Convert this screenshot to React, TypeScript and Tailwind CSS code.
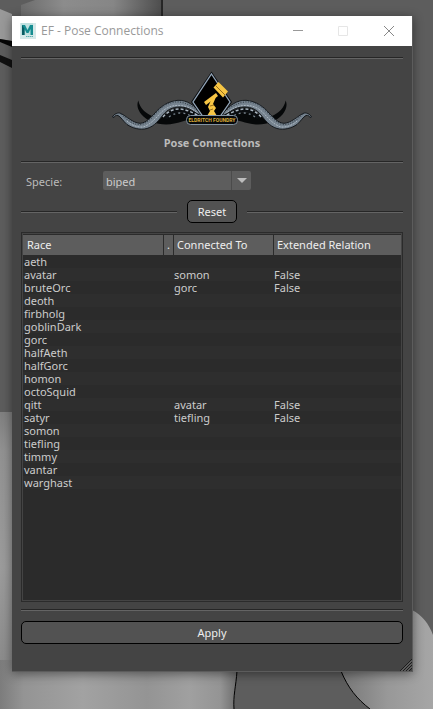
import React from "react";

const rows: [string, string, string][] = [
  ["aeth", "", ""],
  ["avatar", "somon", "False"],
  ["bruteOrc", "gorc", "False"],
  ["deoth", "", ""],
  ["firbholg", "", ""],
  ["goblinDark", "", ""],
  ["gorc", "", ""],
  ["halfAeth", "", ""],
  ["halfGorc", "", ""],
  ["homon", "", ""],
  ["octoSquid", "", ""],
  ["qitt", "avatar", "False"],
  ["satyr", "tiefling", "False"],
  ["somon", "", ""],
  ["tiefling", "", ""],
  ["timmy", "", ""],
  ["vantar", "", ""],
  ["warghast", "", ""],
];

function Separator({ className = "" }: { className?: string }) {
  return <div className={`h-0.5 border-t border-b border-t-[#262626] border-b-[#646464] ${className}`} />;
}

/* Shaded viewport model behind the dialog */
function Viewport() {
  return (
    <svg className="absolute inset-0 h-full w-full" viewBox="0 0 433 709" preserveAspectRatio="none" aria-hidden="true">
      <defs>
        <linearGradient id="head" x1="0" x2="1" y1="0" y2="0">
          <stop offset="0" stopColor="#6c6c6c" />
          <stop offset="0.3" stopColor="#8c8c8c" />
          <stop offset="0.65" stopColor="#868686" />
          <stop offset="1" stopColor="#4c4c4c" />
        </linearGradient>
        <linearGradient id="arm" x1="0" x2="0" y1="0" y2="1">
          <stop offset="0" stopColor="#808080" />
          <stop offset="0.15" stopColor="#929292" />
          <stop offset="0.6" stopColor="#9c9c9c" />
          <stop offset="1" stopColor="#8a8a8a" />
        </linearGradient>
        <linearGradient id="belly" x1="0" x2="1" y1="0" y2="0">
          <stop offset="0" stopColor="#7c7c7c" />
          <stop offset="0.1" stopColor="#949494" />
          <stop offset="0.35" stopColor="#a2a2a2" />
          <stop offset="0.62" stopColor="#949494" />
          <stop offset="0.8" stopColor="#a0a0a0" />
          <stop offset="0.93" stopColor="#949494" />
          <stop offset="1" stopColor="#6c6c6c" />
        </linearGradient>
        <linearGradient id="thigh" x1="0" x2="1" y1="0" y2="0">
          <stop offset="0" stopColor="#777" />
          <stop offset="0.5" stopColor="#989898" />
          <stop offset="1" stopColor="#a6a6a6" />
        </linearGradient>
      </defs>
      <path d="M21 16V5L35 0H163V16Z" fill="url(#head)" />
      <path d="M162 0V16" stroke="#000" />
      <path d="M0 9L12 14V41L0 39Z" fill="#999" />
      <path d="M0 39L12 41V47L0 42Z" fill="#050505" />
      <path d="M0 55L12 60V68L0 62Z" fill="#111" />
      <path d="M0 412H12V671H0Z" fill="url(#arm)" />
      <path d="M0 660H237C237 680 234 695 234 709H0Z" fill="url(#belly)" />
      <path d="M237 671C236 686 233 696 234 709" fill="none" stroke="#000" />
      <path d="M341 671H412V610C422 615 429 624 433 635V709H370C357 699 348 688 341 671Z" fill="url(#thigh)" />
      <path d="M341 671C348 688 357 699 370 709" fill="none" stroke="#000" />
    </svg>
  );
}

function MayaIcon() {
  return (
    <svg className="h-4 w-4" viewBox="0 0 16 16" aria-hidden="true">
      <path d="M0 0H16V16H0Z" fill="#d6e9e9" />
      <path d="M1 0H13V12H1Z" fill="#bfe0df" />
      <path d="M2 12V2H5L7.500 7L10 2H13V12H10.500V6L8.500 10H6.500L4.500 6V12Z" fill="#168d91" />
      <path d="M2 12V2L4.500 6V12Z" fill="#0a5c63" />
      <path d="M6 13.500H13" stroke="#5fb0b0" strokeDasharray="1.500 0.500" />
    </svg>
  );
}

function Tentacle() {
  return (
    <g>
      <path
        d="M26.300 29.500C28 37 33 42 40 45L60 42L80 41L82 47C74 49 66 53 54 53.500C44 53.500 35 50 29.500 43.500C25.500 38.500 24.500 34 26.300 29.500Z"
        fill="#060809"
      />
      <path
        d="M0.500 46C2 43 6 41 9 42.500C14 45 21 52 28 52.300C34 52 38 47 43 42C48 36 56 30 66 29.300C75 29 82 34 89 42V46C82 40 76 36 68 36C60 36 55 39 51 44C47 49 43 55 35 57.500C28 59.500 20 57 15 53.500C11 50 9 46 6 44.500C4 44 2.500 45 2 46.500Z"
        fill="#76838f"
        stroke="#15191d"
        strokeWidth="1"
      />
      <path
        d="M15 50C19 54 25 56.500 31 56C38 54 44 47 49 41.500C55 35.500 62 34 68 34.500C76 35 80 38 86 42"
        fill="none"
        stroke="#b3bec8"
        strokeWidth="0.900"
        strokeDasharray="2 1"
      />
      <path
        d="M9 43C16 50 22 54 29 53.500C36 52 41 45 47 39C54 32 61 30.500 67 31C75 32 80 35 85 39"
        fill="none"
        stroke="#39434c"
        strokeWidth="1.200"
        strokeDasharray="1 1.500"
      />
      <path d="M53 47C57 42 62 39 68 39C74 39 79 42 87 46" fill="none" stroke="#0a0d10" strokeWidth="5" />
      <path d="M51 46C55 41 61 38 67 38C74 38 79 41 87 45" fill="none" stroke="#aab6c1" strokeWidth="1.500" strokeDasharray="3 2" />
      <path d="M57 46C61 43 65 42 69 42C74 42 77 44 81 46" fill="none" stroke="#78858f" strokeWidth="1.300" strokeDasharray="2 3" />
    </g>
  );
}

function Logo() {
  return (
    <svg className="h-[60px] w-[200px]" viewBox="0 0 200 60" role="img" aria-label="Eldritch Foundry">
      <Tentacle />
      <g transform="matrix(-1 0 0 1 200 0)">
        <Tentacle />
      </g>
      <path d="M99.500 0.500L120 31L107 49H92L79 31Z" fill="#0a0d10" />
      <path d="M99.500 3L118 31L107 47H92L81 31Z" fill="#000" stroke="#93a5b8" strokeWidth="1.300" />
      <g fill="#f6c544">
        <path d="M92 31L104 22L106 25L94 34Z" />
        <path d="M101.500 16.500L106.500 11L116 20.500L111 26.500Z" />
        <path d="M100 27L104 26L101 33L104 37L102 40L105 45H95L98 40L96 36Z" />
      </g>
      <path d="M103.500 14.500L113 24M98 35L102 34M98 39L101 38" stroke="#7c5611" strokeWidth="0.800" />
      <rect x="74.500" y="44.500" width="51" height="9" rx="4" fill="#07090b" stroke="#8393a2" />
      <text x="100" y="51" textAnchor="middle" fill="#dfae38" className="font-['Roboto',sans-serif] text-[5px] font-bold">
        ELDRITCH FOUNDRY
      </text>
    </svg>
  );
}

export default function App() {
  return (
    <div className="relative flex min-h-screen bg-[#5d5d5d] pt-4 pr-5 pb-[37px] pl-3 font-['Noto_Sans','Open_Sans',sans-serif] text-[11px] leading-[13px]">
      <Viewport />
      <main className="relative flex flex-1 flex-col border-r border-b border-[#5c5c5c] bg-[#444] shadow-[0_2px_10px_rgba(0,0,0,0.45)]">
        <header className="flex h-[30px] items-center bg-white pl-2">
          <MayaIcon />
          <h1 className="ml-[5px] flex-1 font-['Open_Sans',sans-serif] text-xs text-[#999]">EF - Pose Connections</h1>
          <button aria-label="Minimize" className="flex h-full w-[45px] items-center justify-center">
            <svg className="h-[11px] w-[11px]" viewBox="0 0 11 11"><path d="M0 4.500H10" stroke="#999" /></svg>
          </button>
          <button aria-label="Maximize" disabled className="flex h-full w-[45px] items-center justify-center">
            <svg className="h-[11px] w-[11px]" viewBox="0 0 11 11"><path d="M.5.5H9.500V9.500H.5Z" fill="none" stroke="#e6e6e6" /></svg>
          </button>
          <button aria-label="Close" className="flex h-full w-[46px] items-center justify-center">
            <svg className="h-[11px] w-[11px]" viewBox="0 0 11 11"><path d="M0 0L10 10M10 0L0 10" stroke="#888" /></svg>
          </button>
        </header>

        <div className="flex flex-1 flex-col px-[9px] pt-[11px] pb-[27px]">
          <Separator />
          <div className="flex flex-col items-center pt-3 pb-3">
            <Logo />
            <h2 className="mt-[5px] font-['Open_Sans',sans-serif] font-bold text-[#bbb]">Pose Connections</h2>
          </div>
          <Separator />

          <div className="mt-2 flex items-center pl-[5px]">
            <label htmlFor="specie" className="w-[77px] pt-0.5 text-[#bbb]">Specie:</label>
            <div className="relative">
              <select id="specie" defaultValue="biped" className="block h-[19px] w-[148px] appearance-none rounded-xs bg-[#5d5d5d] pt-0.5 pl-[3px] text-[#ccc]">
                <option>biped</option>
              </select>
              <div className="pointer-events-none absolute inset-y-0 right-0 flex w-5 items-center justify-center border-l border-[#4b4b4b]">
                <svg className="h-[5px] w-[10px]" viewBox="0 0 10 5" aria-hidden="true"><path d="M0 0H10L5 5Z" fill="#bdbdbd" /></svg>
              </div>
            </div>
          </div>

          <div className="mt-[10px] flex items-center gap-[10px]">
            <Separator className="flex-1" />
            <button className="h-[23px] w-[50px] rounded-[5px] border border-black bg-[#525252] text-[#eee]">Reset</button>
            <Separator className="flex-1" />
          </div>

          <div className="mt-[9px] flex-1 border border-[#2b2b2b] bg-[#2b2b2b]">
            <div className="h-full border border-[#444] pt-px">
              <table className="w-full table-fixed border-separate border-spacing-0 text-left">
                <colgroup>
                  <col className="w-[141px]" />
                  <col className="w-[10px]" />
                  <col className="w-[100px]" />
                  <col />
                </colgroup>
                <thead>
                  <tr className="h-[20px] bg-[#5d5d5d] text-[#eee]">
                    <th className="border-r border-[#2b2b2b] pb-px pl-1 font-normal">Race</th>
                    <th className="border-r border-[#2b2b2b] pb-px pl-[3px] font-normal">.</th>
                    <th className="border-r border-[#2b2b2b] pb-px pl-[3px] font-normal">Connected To</th>
                    <th className="pb-px pl-[3px] font-normal">Extended Relation</th>
                  </tr>
                </thead>
                <tbody className="text-[#ccc]">
                  {rows.map(([race, connected, extended]) => (
                    <tr key={race} className="h-[13px] even:bg-[#2e2e2e]">
                      <td className="pl-px">{race}</td>
                      <td />
                      <td>{connected}</td>
                      <td>{extended}</td>
                    </tr>
                  ))}
                </tbody>
              </table>
            </div>
          </div>

          <Separator className="mt-[7px]" />
          <button className="mt-[10px] h-[23px] rounded-[5px] border border-black bg-[#525252] text-[#eee]">Apply</button>
        </div>
        <svg className="absolute right-0 bottom-0 h-3 w-3" viewBox="0 0 12 12" aria-hidden="true">
          <path d="M0 12L12 0M3 12L12 3M6 12L12 6M9 12L12 9" stroke="#1c1c1c" />
          <path d="M1.500 12L12 1.500M4.500 12L12 4.500M7.500 12L12 7.500" stroke="#858585" strokeWidth="0.700" />
        </svg>
      </main>
    </div>
  );
}
